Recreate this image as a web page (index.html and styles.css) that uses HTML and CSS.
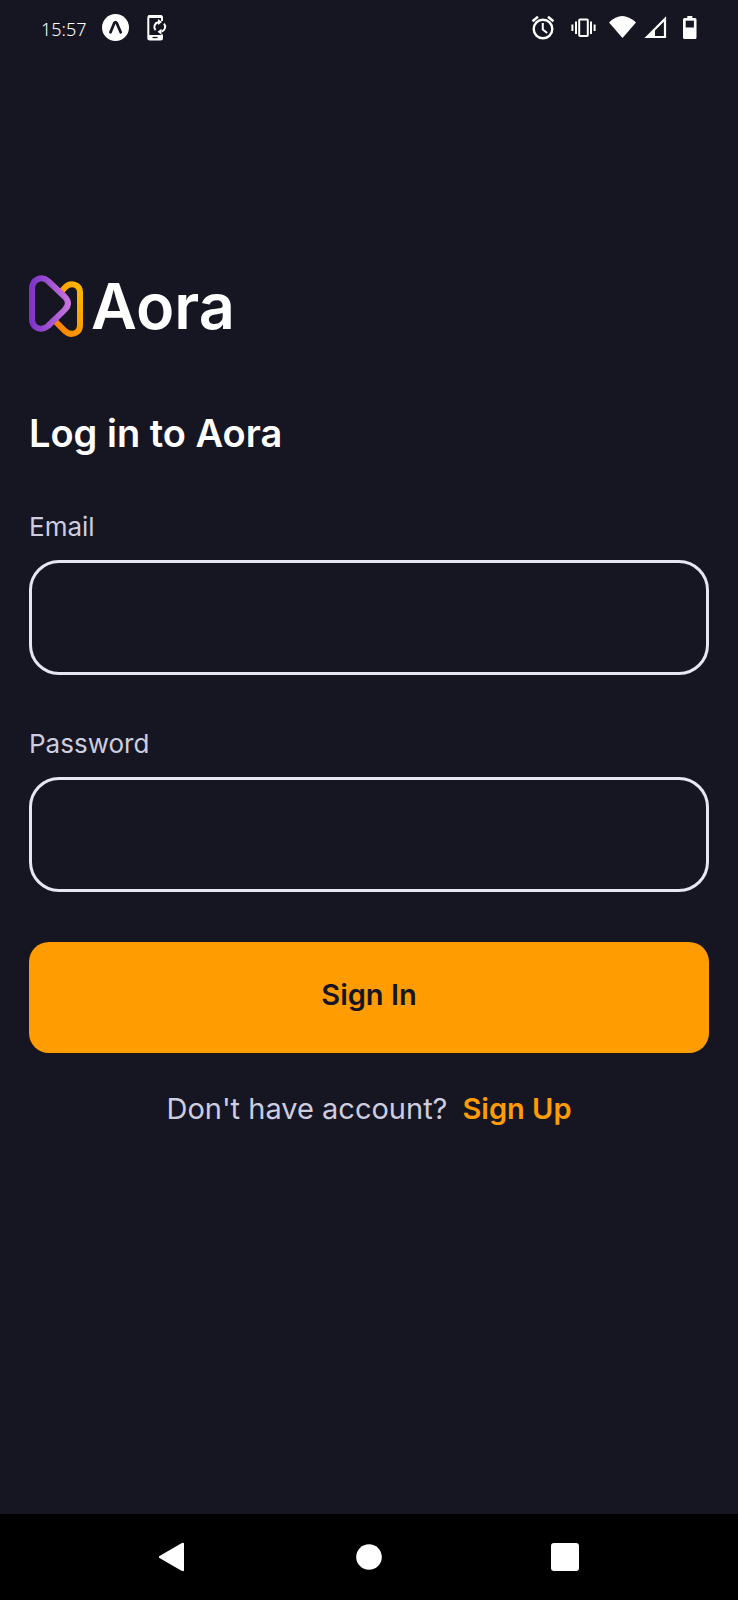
FILE: index.html
```html
<!DOCTYPE html>
<html lang="en">
<head>
<meta charset="utf-8">
<meta name="viewport" content="width=device-width, initial-scale=1">
<title>Log in to Aora</title>
<link rel="stylesheet" href="styles.css">
</head>
<body>
<header class="status">
  <div class="status-group status-left">
    <time class="clock">15:57</time>
    <svg width="28" height="28" viewBox="0 0 28 28" aria-hidden="true"><circle cx="13.500" cy="13.500" r="13.500" fill="#fff"/><path d="M8.500 18.200 12.300 9Q13.500 7.200 14.700 9L18.700 18.200" fill="none" stroke="#161622" stroke-width="2.800" stroke-linecap="round" stroke-linejoin="round"/></svg>
    <svg width="22" height="28" viewBox="0 0 22 28" aria-hidden="true"><path d="M17 7V3.500Q17 2 15.500 2H5Q3.300 2 3.300 4V24Q3.300 25.500 5 25.500H15.500Q17 25.500 17 24V20.500" fill="none" stroke="#fff" stroke-width="2"/><path d="M3 1.500H17V4H3zM3 21H17V26H3z" fill="#fff"/><path d="M7.500 23.500h5" stroke="#161622" stroke-width="1.300"/><path d="M13 8.300a4.800 4.800 0 0 0-2.500 7.800M16.500 17.500a4.800 4.800 0 0 0 2.500-7.800" fill="none" stroke="#fff" stroke-width="2"/><path d="M13 5v6l4-3zM16.500 14.700v6l-4-3z" fill="#fff"/></svg>
  </div>
  <div class="status-group status-right">
    <svg width="31" height="28" viewBox="0 0 31 28" aria-hidden="true"><g fill="none" stroke="#fff" stroke-width="2.400"><circle cx="12" cy="15" r="9.300"/><path d="M1.500 7.200 7 2.800M17 2.800 22.500 7.200"/><path d="M11.800 9v6.600l4.400 3.400" stroke-width="2"/></g></svg>
    <svg width="30" height="28" viewBox="0 0 30 28" aria-hidden="true"><g fill="none" stroke="#fff" stroke-width="2"><rect x="9.200" y="5.500" width="8.600" height="16.500" rx=".8"/><path d="M6 7.500v12.500M21 7.500v12.500M2.400 10.500v6.500M24.600 10.500v6.500"/></g></svg>
    <svg width="28" height="28" viewBox="0 0 28 28" aria-hidden="true"><path d="M1 8.500Q14 -4.500 28 8.500L14.500 24z" fill="#fff"/></svg>
    <svg width="31" height="28" viewBox="0 0 31 28" aria-hidden="true"><path d="M3 23 21 5V23z" fill="none" stroke="#fff" stroke-width="2.200"/><path d="M3 23 11 14.500V23z" fill="#fff"/></svg>
    <svg width="14" height="28" viewBox="0 0 14 28" aria-hidden="true"><path d="M4.300 2h5v2H12q1.500 0 1.500 1.500v18Q13.500 25 12 25H1.500Q0 25 0 23.500v-18Q0 4 1.500 4h2.800z" fill="#fff"/><path d="M2.700 6.700h8.200v6.800H2.700z" fill="#161622"/></svg>
  </div>
</header>

<main class="login">
  <div class="brand">
    <svg class="brand-mark" width="56" height="64" viewBox="0 0 56 64" aria-hidden="true">
      <defs>
        <linearGradient id="violet" x1="0" y1="0" x2="1" y2="0"><stop offset="0" stop-color="#7f35c8"/><stop offset="1" stop-color="#c472dc"/></linearGradient>
        <linearGradient id="amber" x1="0" y1="1" x2="1" y2="0"><stop offset="0" stop-color="#ff7b00"/><stop offset="1" stop-color="#ffb800"/></linearGradient>
      </defs>
      <path d="M31 19 36 13.500C42 7.500 51 10.500 51 18.500V51C51 59.500 42 62.500 36 57L25.500 46.500" fill="none" stroke="url(#amber)" stroke-width="6"/>
      <path d="M3 15C3 5 12.500 1.500 19 7L35.500 22.500C40 27 40 31.500 35.500 36L19 52C12 57.500 3 54 3 45Z" fill="none" stroke="url(#violet)" stroke-width="6" stroke-linejoin="round"/>
    </svg>
    <span class="brand-name">Aora</span>
  </div>
  <h1 class="title">Log in to Aora</h1>
  <form class="form">
    <div class="field">
      <label for="email">Email</label>
      <input id="email" type="email" autocomplete="email">
    </div>
    <div class="field">
      <label for="password">Password</label>
      <input id="password" type="password" autocomplete="current-password">
    </div>
    <button class="submit" type="submit">Sign In</button>
  </form>
  <p class="signup"><span>Don't have account?</span><a href="#signup">Sign Up</a></p>
</main>

<nav class="system-nav" aria-label="System">
  <button type="button" aria-label="Back"><svg width="28" height="30" viewBox="0 0 28 30" aria-hidden="true"><path d="M0.500 14 22.500 1.200Q25 0 25 2V28Q25 30 22.500 28.800L.5 16Q-.7 15 .5 14z" fill="#fff"/></svg></button>
  <button type="button" aria-label="Home"><svg width="28" height="28" viewBox="0 0 28 28" aria-hidden="true"><circle cx="14" cy="14" r="12.800" fill="#fff"/></svg></button>
  <button type="button" aria-label="Recent apps"><svg width="28" height="28" viewBox="0 0 28 28" aria-hidden="true"><rect width="28" height="28" rx="3" fill="#fff"/></svg></button>
</nav>
</body>
</html>
```

FILE: styles.css
```css
* {
  box-sizing: border-box;
}

body {
  margin: 0;
  min-height: 100vh;
  display: flex;
  flex-direction: column;
  background: #161622;
  color: #fff;
  font-family: Inter, "Liberation Sans", sans-serif;
}

svg {
  display: block;
  flex: none;
}

.status {
  display: flex;
  justify-content: space-between;
  height: 56px;
  padding: 0 41px;
}

.status-group {
  display: flex;
  align-items: center;
}

.status-left {
  gap: 15px;
}

.status-right {
  gap: 8px;
}

.clock {
  padding-top: 2px;
  font-family: "Noto Sans", sans-serif;
  font-size: 18px;
  font-weight: 300;
}

.login {
  flex: 1;
  padding: 218px 29px 40px;
}

.brand {
  display: flex;
  align-items: center;
  gap: 6px;
  height: 64px;
}

.brand-name {
  font-size: 63px;
  font-weight: 600;
  line-height: 62px;
}

.title {
  margin: 70px 0 0;
  font-size: 38px;
  font-weight: 600;
  line-height: 50px;
}

.form {
  display: flex;
  flex-direction: column;
  gap: 50px;
  margin-top: 52px;
}

.field {
  display: flex;
  flex-direction: column;
  gap: 16px;
}

.field label {
  color: #cdcde0;
  font-size: 26px;
  line-height: 34px;
}

.field + .field {
  margin-top: 2px;
}

.field input {
  width: 100%;
  height: 115px;
  padding: 0 32px;
  border: 3px solid #e8e6f0;
  border-radius: 30px;
  outline: 0;
  background: transparent;
  color: #fff;
  font: inherit;
  font-size: 28px;
}

.submit {
  height: 111px;
  padding: 0 0 6px;
  border: 0;
  border-radius: 20px;
  background: #ff9c01;
  color: #161622;
  font: inherit;
  font-size: 29px;
  font-weight: 600;
}

.signup {
  display: flex;
  justify-content: center;
  gap: 15px;
  margin: 38px 0 0;
  color: #cdcde0;
  font-size: 29px;
  line-height: 36px;
}

.signup a {
  color: #ff9c01;
  font-weight: 600;
  text-decoration: none;
}

.system-nav {
  display: flex;
  justify-content: center;
  gap: 168px;
  height: 86px;
  background: #000;
}

.system-nav button {
  display: flex;
  align-items: center;
  padding: 0;
  border: 0;
  background: none;
}
```
